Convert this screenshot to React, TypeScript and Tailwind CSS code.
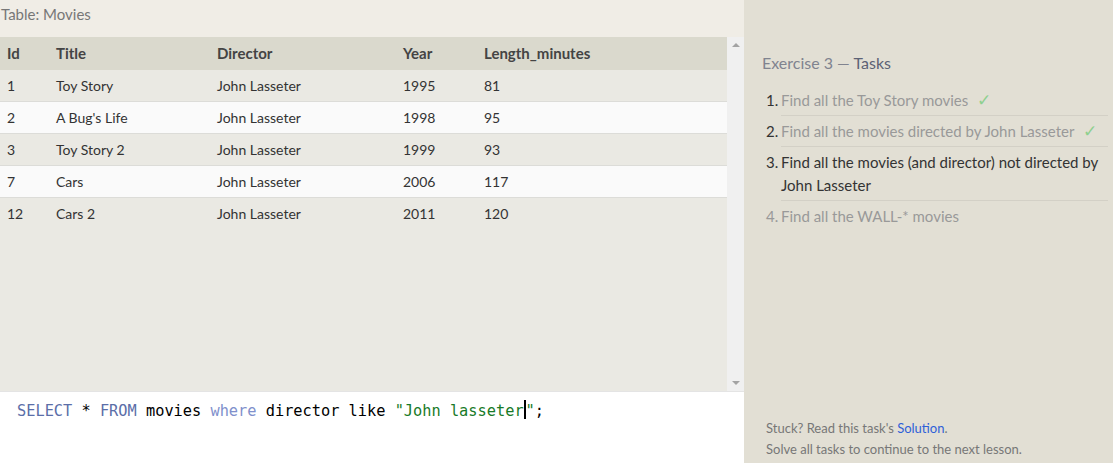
const movies = [
  { id: 1, title: "Toy Story", director: "John Lasseter", year: 1995, length: 81 },
  { id: 2, title: "A Bug's Life", director: "John Lasseter", year: 1998, length: 95 },
  { id: 3, title: "Toy Story 2", director: "John Lasseter", year: 1999, length: 93 },
  { id: 7, title: "Cars", director: "John Lasseter", year: 2006, length: 117 },
  { id: 12, title: "Cars 2", director: "John Lasseter", year: 2011, length: 120 },
];

const tasks = [
  { text: "Find all the Toy Story movies", done: true },
  { text: "Find all the movies directed by John Lasseter", done: true },
  { text: "Find all the movies (and director) not directed by John Lasseter", current: true },
  { text: "Find all the WALL-* movies" },
];

function Row({ cells, className }: { cells: (string | number)[]; className: string }) {
  return (
    <div className={`grid grid-cols-[49px_161px_186px_81px_1fr] items-center pl-[7px] ${className}`}>
      {cells.map((c, i) => (
        <div key={i}>{c}</div>
      ))}
    </div>
  );
}

export default function App() {
  return (
    <div className="flex h-[463px] w-[1113px] overflow-hidden bg-[#f0ede6] font-['Lato','Open_Sans',sans-serif] text-[14px] text-[#333]">
      <div className="flex w-[744px] flex-col">
        <div className="h-[37px] pt-[3px] pl-px text-[15px] text-[#777]">Table: Movies</div>
        <div className="flex flex-1 min-h-0">
          <div className="flex flex-1 flex-col bg-[#eae9e3]">
            <Row
              cells={["Id", "Title", "Director", "Year", "Length_minutes"]}
              className="h-[33px] bg-[#dad9cd] pb-px font-bold text-[15px] text-[#444]"
            />
            {movies.map((m, i) => (
              <Row
                key={m.id}
                cells={[m.id, m.title, m.director, m.year, m.length]}
                className={`h-[32px] pb-px ${i < movies.length - 1 ? "border-b border-[#dcdcd8]" : ""} ${
                  i % 2 ? "bg-[#fafafa]" : "bg-[#eae9e3]"
                }`}
              />
            ))}
          </div>
          <div className="flex w-[17px] flex-col items-center justify-between bg-[#f0f0f0] py-[6px]">
            <div className="h-0 w-0 border-x-[4px] border-b-[4px] border-x-transparent border-b-[#a3a3a3]" />
            <div className="h-0 w-0 border-x-[4px] border-t-[4px] border-x-transparent border-t-[#a3a3a3]" />
          </div>
        </div>
        <div className="h-[72px] border-t border-[#e4e4e4] bg-white pl-[17px] pt-[5px] font-['DejaVu_Sans_Mono',monospace] text-[15.3px] text-black">
          <span className="text-[#5b6ea8]">SELECT</span> * <span className="text-[#5b6ea8]">FROM</span> movies{" "}
          <span className="text-[#8090cc]">where</span> director like{" "}
          <span className="text-[#187a28]">"John lasseter</span>
          <span className="inline-block h-[19px] w-[2px] translate-y-[3px] bg-black" />
          <span className="text-[#187a28]">"</span>;
        </div>
      </div>
      <div className="flex flex-1 flex-col justify-between bg-[#e2dfd4] pl-[18px] pr-[5px] pb-[3px] pt-[51px]">
        <div>
          <div className="text-[16px] text-[#80838f]">
            Exercise 3 — <span className="text-[#5c6275]">Tasks</span>
          </div>
          <ol className="mt-[10px] text-[15px]">
            {tasks.map((t, i) => (
              <li key={i} className="flex">
                <span className={`w-[19px] shrink-0 pt-[4px] pl-[4px] leading-[23px] ${i === 3 ? "text-[#999]" : "text-[#333]"}`}>
                  {i + 1}.
                </span>
                <div
                  className={`flex-1 pt-[4px] pb-[3px] leading-[23px] ${i < 3 ? "border-b border-[#d3d0c6]" : ""} ${
                    t.current ? "text-[#333]" : "text-[#999]"
                  }`}
                >
                  {t.text}
                  {t.done && <span className="ml-[9px] text-[17px] leading-none text-[#8fd08f]">✓</span>}
                </div>
              </li>
            ))}
          </ol>
        </div>
        <div className="pl-[4px] text-[13px] leading-[21px] text-[#777]">
          <div>
            Stuck? Read this task's <span className="text-[#2f5fd8]">Solution</span>.
          </div>
          <div>Solve all tasks to continue to the next lesson.</div>
        </div>
      </div>
    </div>
  );
}
